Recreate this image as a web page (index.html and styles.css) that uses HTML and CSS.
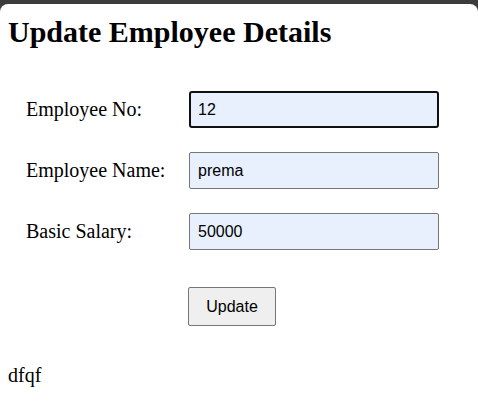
FILE: index.html
```html
<!DOCTYPE html>
<html>
<head>
<meta charset="utf-8">
<link rel="stylesheet" href="styles.css">
</head>
<body>
<div class="page">
  <h1 class="title">Update Employee Details</h1>
  <form class="form">
    <label class="label" for="eno">Employee No:</label>
    <input class="field focused" id="eno" type="text" value="12">
    <label class="label" for="ename">Employee Name:</label>
    <input class="field" id="ename" type="text" value="prema">
    <label class="label" for="sal">Basic Salary:</label>
    <input class="field" id="sal" type="text" value="50000">
    <div class="actions">
      <button class="btn" type="button">Update</button>
    </div>
  </form>
  <p class="note">dfqf</p>
</div>
</body>
</html>
```
FILE: styles.css
```css
html {
  background: #3c3c3c;
}
body {
  margin: 0;
  font-family: "Liberation Serif", "Times New Roman", serif;
  font-size: 20px;
  color: #000;
}
.page {
  margin-top: 4px;
  background: #fff;
  border-radius: 8px 8px 0 0;
  height: 411px;
  padding: 0 8px;
  box-sizing: border-box;
  overflow: hidden;
}
.title {
  margin: 11px 0 0;
  font-size: 30px;
  font-weight: bold;
  line-height: 33px;
}
.form {
  display: grid;
  grid-template-columns: 163px 250px;
  grid-template-rows: 37px 37px 37px auto;
  row-gap: 24px;
  align-items: center;
  padding-left: 18px;
  margin-top: 43px;
}
.label {
  font-size: 20px;
}
.field {
  box-sizing: border-box;
  width: 250px;
  height: 37px;
  margin: 0;
  padding: 0 8px;
  border: 1px solid #767676;
  border-radius: 2px;
  background: #e8f0fe;
  font-family: "Liberation Sans", Arial, sans-serif;
  font-size: 16px;
  color: #000;
  outline: none;
}
.field.focused {
  border: 2px solid #101010;
  border-radius: 3px;
  padding-left: 7px;
}
.actions {
  grid-column: 2;
  margin-top: 13px;
  margin-left: -1px;
  height: 39px;
}
.btn {
  box-sizing: border-box;
  width: 88px;
  height: 39px;
  border: 1px solid #767676;
  border-radius: 2px;
  background: #efefef;
  font-family: "Liberation Sans", Arial, sans-serif;
  font-size: 16px;
  color: #000;
  padding: 0;
  display: block;
}
.note {
  margin: 38px 0 0;
  font-size: 20px;
}
```
